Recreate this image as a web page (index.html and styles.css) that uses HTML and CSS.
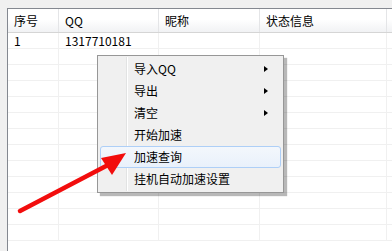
FILE: index.html
```html
<!DOCTYPE html>
<html>
<head>
<meta charset="utf-8">
<link rel="stylesheet" href="styles.css">
</head>
<body>
<div class="frame">
  <div class="grid">
    <div class="row head">
      <div class="cell c1">序号</div>
      <div class="cell c2">QQ</div>
      <div class="cell c3">昵称</div>
      <div class="cell c4">状态信息</div>
      <div class="cell c5"></div>
    </div>
    <div class="row"><div class="cell c1">1</div><div class="cell c2">1317710181</div><div class="cell c3"></div><div class="cell c4"></div><div class="cell c5"></div></div>
    <div class="row"><div class="cell c1"></div><div class="cell c2"></div><div class="cell c3"></div><div class="cell c4"></div><div class="cell c5"></div></div>
    <div class="row"><div class="cell c1"></div><div class="cell c2"></div><div class="cell c3"></div><div class="cell c4"></div><div class="cell c5"></div></div>
    <div class="row"><div class="cell c1"></div><div class="cell c2"></div><div class="cell c3"></div><div class="cell c4"></div><div class="cell c5"></div></div>
    <div class="row"><div class="cell c1"></div><div class="cell c2"></div><div class="cell c3"></div><div class="cell c4"></div><div class="cell c5"></div></div>
    <div class="row"><div class="cell c1"></div><div class="cell c2"></div><div class="cell c3"></div><div class="cell c4"></div><div class="cell c5"></div></div>
    <div class="row"><div class="cell c1"></div><div class="cell c2"></div><div class="cell c3"></div><div class="cell c4"></div><div class="cell c5"></div></div>
    <div class="row"><div class="cell c1"></div><div class="cell c2"></div><div class="cell c3"></div><div class="cell c4"></div><div class="cell c5"></div></div>
    <div class="row"><div class="cell c1"></div><div class="cell c2"></div><div class="cell c3"></div><div class="cell c4"></div><div class="cell c5"></div></div>
    <div class="row"><div class="cell c1"></div><div class="cell c2"></div><div class="cell c3"></div><div class="cell c4"></div><div class="cell c5"></div></div>
    <div class="row"><div class="cell c1"></div><div class="cell c2"></div><div class="cell c3"></div><div class="cell c4"></div><div class="cell c5"></div></div>
    <div class="row"><div class="cell c1"></div><div class="cell c2"></div><div class="cell c3"></div><div class="cell c4"></div><div class="cell c5"></div></div>
    <div class="row"><div class="cell c1"></div><div class="cell c2"></div><div class="cell c3"></div><div class="cell c4"></div><div class="cell c5"></div></div>
  </div>
</div>

<div class="menu">
  <div class="gutter"></div>
  <div class="item"><span>导入QQ</span><i class="sub"></i></div>
  <div class="item"><span>导出</span><i class="sub"></i></div>
  <div class="item"><span>清空</span><i class="sub"></i></div>
  <div class="item"><span>开始加速</span></div>
  <div class="item hot"><span>加速查询</span></div>
  <div class="item"><span>挂机自动加速设置</span></div>
</div>

<svg class="arrow" width="392" height="251" viewBox="0 0 392 251">
  <line x1="20" y1="211" x2="108" y2="165" stroke="#f20d0d" stroke-width="4.5" stroke-linecap="round"/>
  <polygon points="126,153 101,158 112,175" fill="#f20d0d"/>
</svg>
</body>
</html>
```

FILE: styles.css
```css
html, body {
  margin: 0;
  padding: 0;
  width: 392px;
  height: 251px;
  overflow: hidden;
  background: #f0f0f0;
  font-family: "Noto Sans CJK SC", "Liberation Sans", sans-serif;
  font-size: 12px;
  color: #000;
}

.frame {
  padding: 8px 0 0 7px;
  width: 392px;
  height: 251px;
  box-sizing: border-box;
  overflow: hidden;
}

.grid {
  background: #fff;
  border-top: 1px solid #848890;
  border-left: 1px solid #848890;
  height: 243px;
  width: 385px;
  box-sizing: border-box;
  overflow: hidden;
}

.row {
  display: flex;
  height: 16px;
  border-bottom: 1px solid #f0f0f0;
  box-sizing: border-box;
}

.cell {
  box-sizing: border-box;
  border-right: 1px solid #f0f0f0;
  padding-left: 6px;
  line-height: 15px;
  white-space: nowrap;
  flex: none;
}

.c1 { width: 51px; }
.c2 { width: 100px; }
.c3 { width: 101px; }
.c4 { width: 127px; }
.c5 { flex: 1; min-width: 0; border-right: none; }

.row.head {
  height: 24px;
  border-bottom: 1px solid #d5d5d5;
  background: linear-gradient(#ffffff 0%, #ffffff 45%, #f1f2f4 100%);
}

.row.head .cell {
  line-height: 23px;
  border-right: 1px solid #e4e5e7;
}
.row.head .c5 { border-right: none; }

.menu {
  position: absolute;
  left: 97px;
  top: 55px;
  width: 187px;
  height: 138px;
  box-sizing: border-box;
  background: #f0f0f0;
  border: 1px solid #979797;
  padding: 2px 2px;
  box-shadow: 3px 3px 1px rgba(0, 0, 0, 0.28);
}

.gutter {
  position: absolute;
  left: 28px;
  top: 1px;
  bottom: 1px;
  width: 1px;
  background: #e2e3e3;
  border-right: 1px solid #ffffff;
}

.item {
  position: relative;
  height: 22px;
  display: flex;
  align-items: center;
  padding-left: 33px;
  box-sizing: border-box;
  border: 1px solid transparent;
  border-radius: 3px;
}

.item span {
  font-size: 12px;
  line-height: 14px;
}

.item.hot {
  border-color: #aecff7;
  background: linear-gradient(#f3f7fc, #e9f1fb);
}

.sub {
  position: absolute;
  right: 12px;
  top: 7px;
  width: 0;
  height: 0;
  border-top: 3.5px solid transparent;
  border-bottom: 3.5px solid transparent;
  border-left: 4px solid #000;
}

.arrow {
  position: absolute;
  left: 0;
  top: 0;
  pointer-events: none;
}
```
